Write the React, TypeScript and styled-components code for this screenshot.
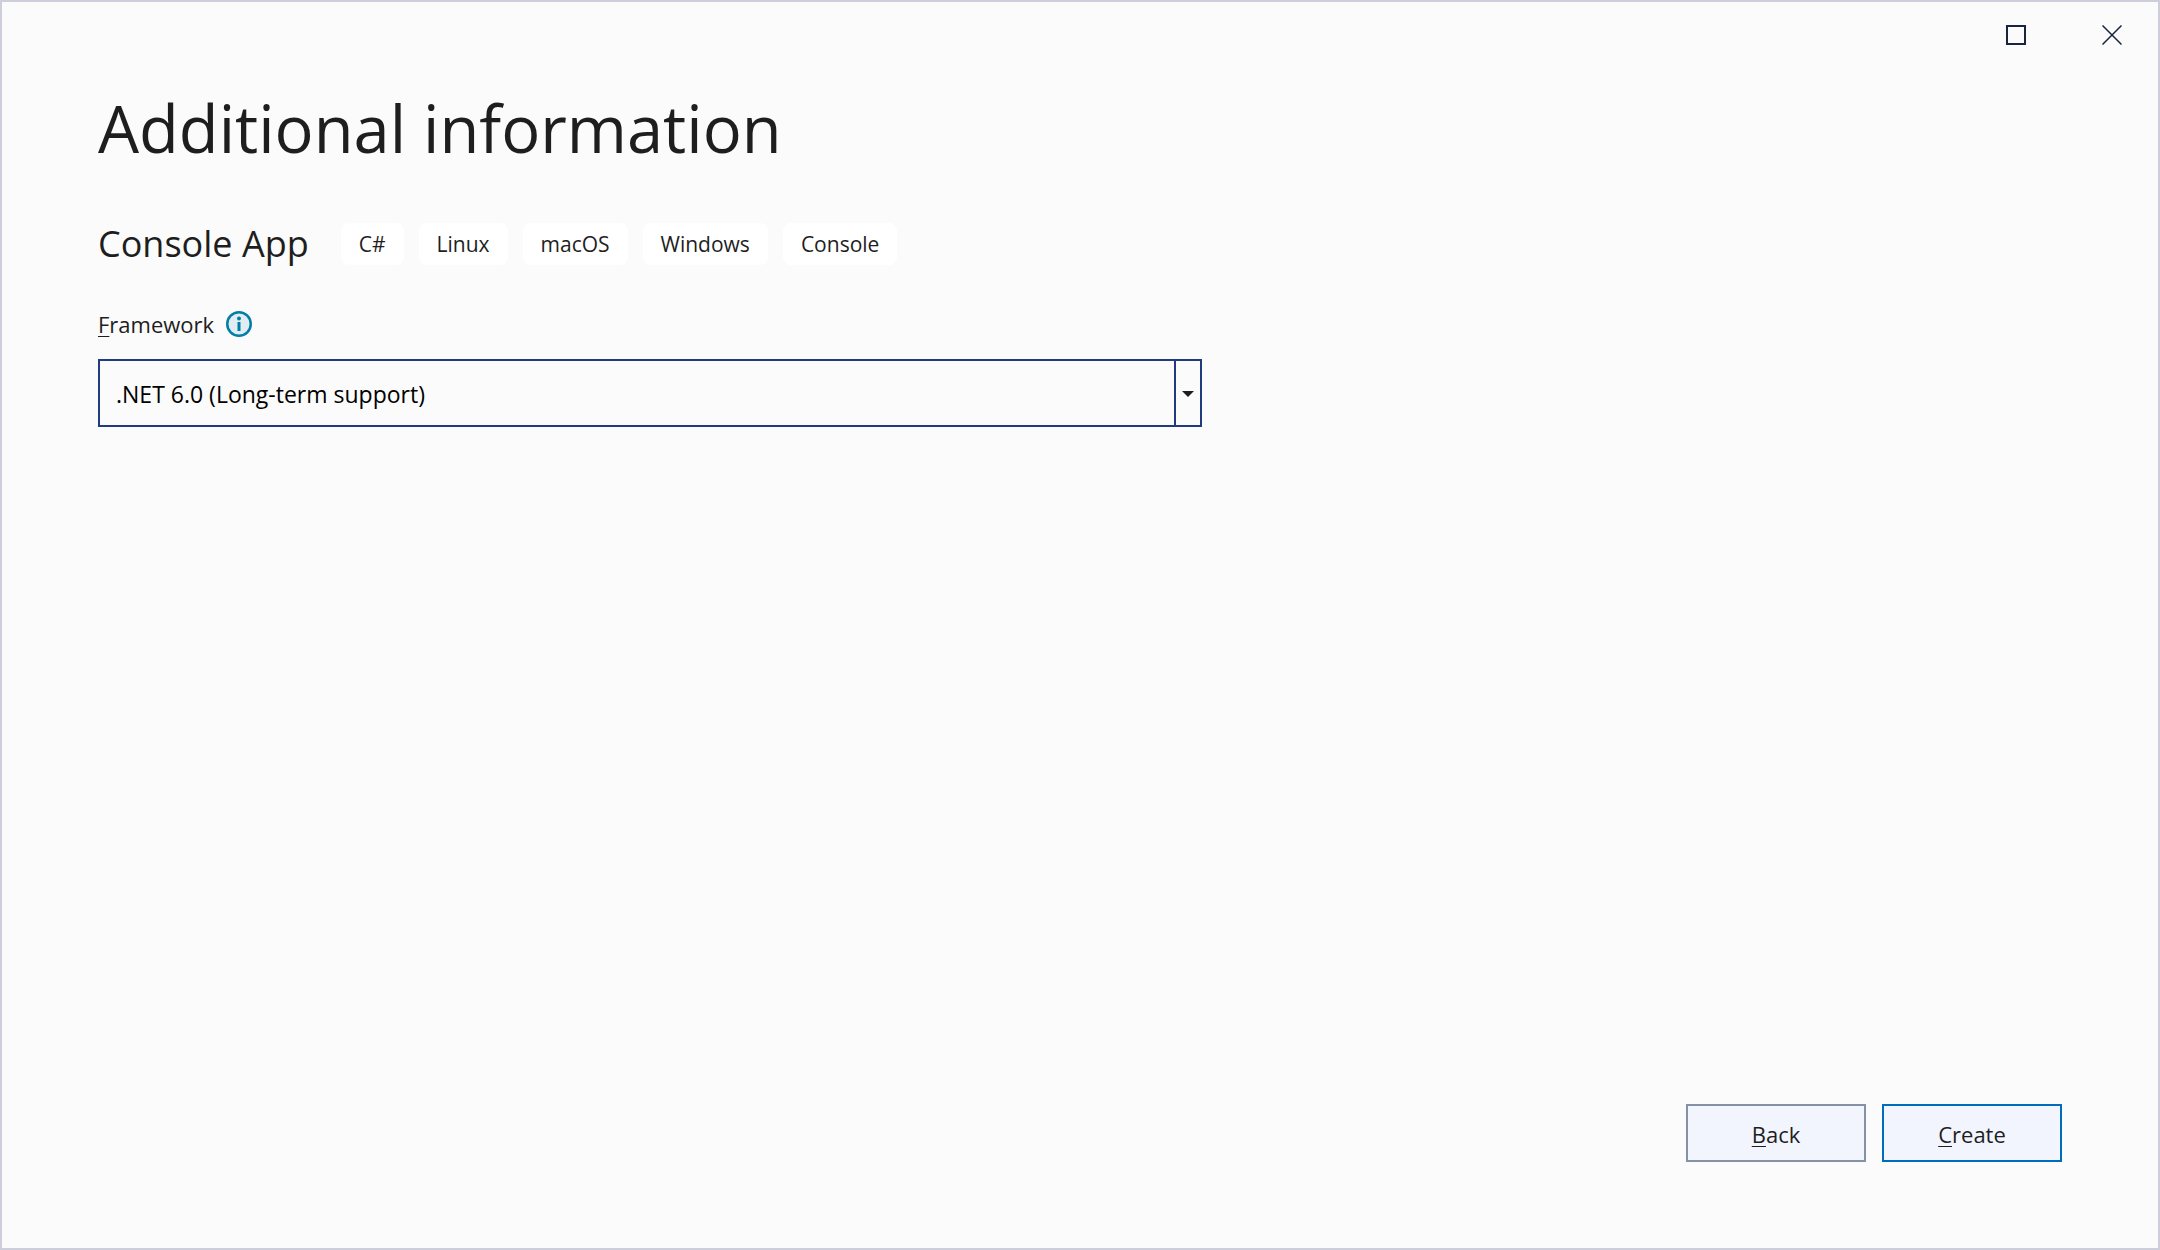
import React, { useState } from "react";
import styled, { createGlobalStyle } from "styled-components";

const GlobalStyle = createGlobalStyle`
  *, *::before, *::after { box-sizing: border-box; }
  body {
    margin: 0;
    background: #fbfbfb;
    color: #1e1e1e;
    font-family: "Segoe UI", "Open Sans", "Noto Sans", sans-serif;
    font-size: 22px;
    line-height: 32px;
  }
`;

const Dialog = styled.div`
  display: flex;
  flex-direction: column;
  min-height: 100vh;
  border: 2px solid #cccedb;
`;

const TitleBar = styled.header`
  display: flex;
  justify-content: flex-end;
  gap: 4px;
`;

const CaptionButton = styled.button`
  display: grid;
  place-items: center;
  width: 92px;
  height: 66px;
  padding: 0;
  border: 0;
  background: transparent;
  color: #17253d;
`;

const Content = styled.main`
  flex: 1;
  padding: 16px 96px 0;
`;

const Heading = styled.h1`
  margin: 0;
  font-size: 65px;
  font-weight: 400;
  line-height: 88px;
`;

const TemplateRow = styled.div`
  display: flex;
  align-items: center;
  gap: 32px;
  margin-top: 48px;
`;

const TemplateName = styled.h2`
  margin: 0;
  font-size: 36px;
  font-weight: 400;
  line-height: 48px;
`;

const TagList = styled.ul`
  display: flex;
  gap: 15px;
  margin: 0;
  padding: 0;
  list-style: none;
`;

const Tag = styled.li`
  padding: 5px 18px;
  border-radius: 8px;
  background: #fff;
  font-size: 21px;
`;

const LabelRow = styled.div`
  display: flex;
  align-items: center;
  gap: 12px;
  margin-top: 40px;
`;

const AccessKey = styled.span`
  text-decoration: underline;
  text-decoration-thickness: 1px;
  text-underline-offset: 3px;
`;

const SelectBox = styled.div`
  display: grid;
  grid-template-columns: 1fr 26px;
  align-items: center;
  max-width: 1104px;
  height: 68px;
  margin-top: 19px;
  border: 2px solid #1f3c7c;
`;

const Select = styled.select`
  grid-area: 1 / 1 / 2 / 3;
  width: 100%;
  height: 100%;
  padding: 2px 40px 0 16px;
  border: 0;
  border-radius: 0;
  appearance: none;
  background: transparent;
  color: #000;
  font: inherit;
  font-size: 23px;
`;

const Arrow = styled.span`
  grid-area: 1 / 2;
  display: grid;
  place-items: center;
  height: 100%;
  padding-top: 2px;
  border-left: 2px solid #1f3c7c;
  pointer-events: none;
`;

const Footer = styled.footer`
  display: flex;
  justify-content: flex-end;
  gap: 16px;
  padding: 0 96px 86px;
`;

const Button = styled.button<{ $primary?: boolean }>`
  width: 180px;
  height: 58px;
  padding: 2px 0 0;
  border: 2px solid ${(p) => (p.$primary ? "#006cbe" : "#8591a5")};
  background: #f2f5fd;
  color: #1e1e1e;
  font: inherit;
`;

const tags = ["C#", "Linux", "macOS", "Windows", "Console"];

function InfoIcon() {
  return (
    <svg width="26" height="26" viewBox="0 0 26 26" role="img" aria-label="Framework information">
      <circle cx="13" cy="13" r="11.75" fill="#e0edf2" stroke="#007ea7" strokeWidth="2.5" />
      <circle cx="13" cy="7.5" r="2" fill="#007ea7" />
      <path d="M11.5 11h3v9h-3z" fill="#007ea7" />
    </svg>
  );
}

export default function App() {
  const [framework, setFramework] = useState("net6.0");
  return (
    <>
      <GlobalStyle />
      <Dialog>
        <TitleBar>
          <CaptionButton type="button" aria-label="Maximize">
            <svg width="20" height="20" viewBox="0 0 20 20" fill="none" stroke="currentColor" strokeWidth="2">
              <path d="M1 1h18v18H1z" />
            </svg>
          </CaptionButton>
          <CaptionButton type="button" aria-label="Close">
            <svg width="20" height="20" viewBox="0 0 20 20" fill="none" stroke="currentColor" strokeWidth="1.5">
              <path d="M.5.5l19 19M19.5.5l-19 19" />
            </svg>
          </CaptionButton>
        </TitleBar>
        <Content>
          <Heading>Additional information</Heading>
          <TemplateRow>
            <TemplateName>Console App</TemplateName>
            <TagList>
              {tags.map((tag) => (
                <Tag key={tag}>{tag}</Tag>
              ))}
            </TagList>
          </TemplateRow>
          <LabelRow>
            <label htmlFor="framework">
              <AccessKey>F</AccessKey>ramework
            </label>
            <InfoIcon />
          </LabelRow>
          <SelectBox>
            <Select id="framework" value={framework} onChange={(e) => setFramework(e.target.value)}>
              <option value="net6.0">.NET 6.0 (Long-term support)</option>
            </Select>
            <Arrow>
              <svg width="12" height="6" viewBox="0 0 12 6" fill="#1e1e1e" aria-hidden="true">
                <path d="M0 0h12L6 6z" />
              </svg>
            </Arrow>
          </SelectBox>
        </Content>
        <Footer>
          <Button type="button">
            <AccessKey>B</AccessKey>ack
          </Button>
          <Button type="button" $primary>
            <AccessKey>C</AccessKey>reate
          </Button>
        </Footer>
      </Dialog>
    </>
  );
}
